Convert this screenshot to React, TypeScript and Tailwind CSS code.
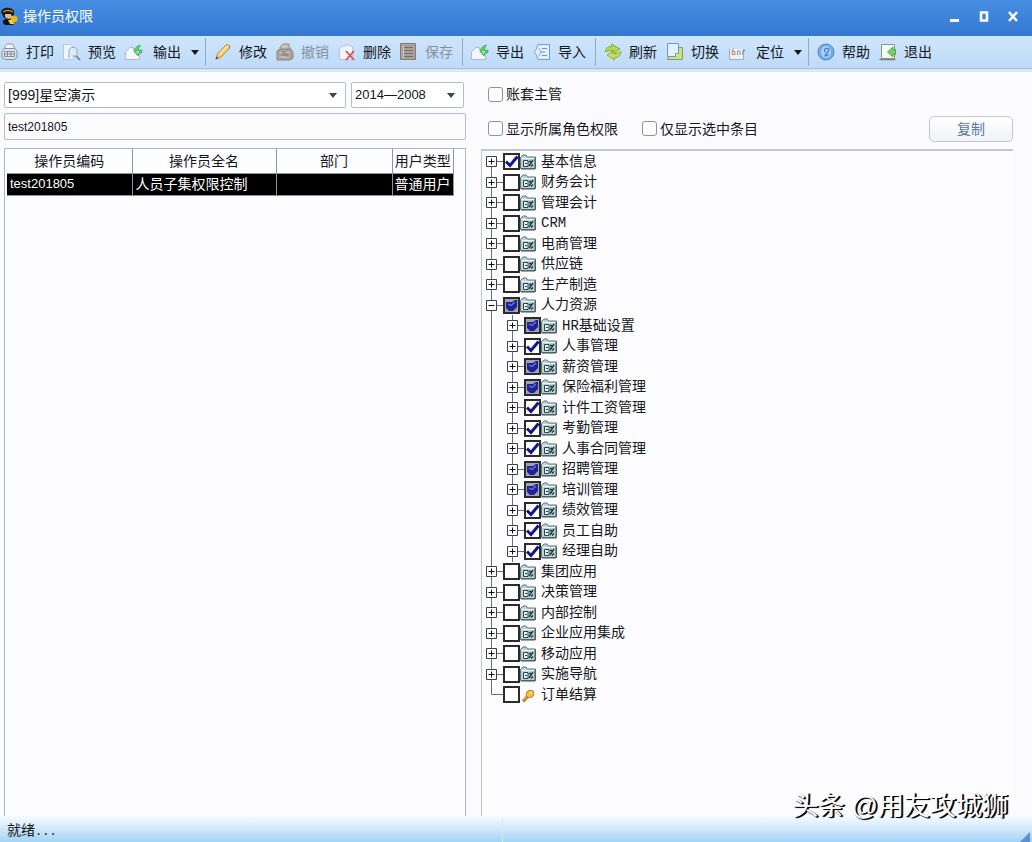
import { useState, type ReactNode } from "react"
import clsx from "clsx"

type CheckState = "off" | "on" | "mixed"

type TreeNode = {
  label: string
  state: CheckState
  open?: boolean
  leaf?: boolean
  children?: TreeNode[]
}

const TREE: TreeNode[] = [
  { label: "基本信息", state: "on" },
  { label: "财务会计", state: "off" },
  { label: "管理会计", state: "off" },
  { label: "CRM", state: "off" },
  { label: "电商管理", state: "off" },
  { label: "供应链", state: "off" },
  { label: "生产制造", state: "off" },
  {
    label: "人力资源",
    state: "mixed",
    open: true,
    children: [
      { label: "HR基础设置", state: "mixed" },
      { label: "人事管理", state: "on" },
      { label: "薪资管理", state: "mixed" },
      { label: "保险福利管理", state: "mixed" },
      { label: "计件工资管理", state: "on" },
      { label: "考勤管理", state: "on" },
      { label: "人事合同管理", state: "on" },
      { label: "招聘管理", state: "mixed" },
      { label: "培训管理", state: "mixed" },
      { label: "绩效管理", state: "on" },
      { label: "员工自助", state: "on" },
      { label: "经理自助", state: "on" },
    ],
  },
  { label: "集团应用", state: "off" },
  { label: "决策管理", state: "off" },
  { label: "内部控制", state: "off" },
  { label: "企业应用集成", state: "off" },
  { label: "移动应用", state: "off" },
  { label: "实施导航", state: "off" },
  { label: "订单结算", state: "off", leaf: true },
]

const Icon = ({ children }: { children: ReactNode }) => (
  <svg viewBox="0 0 18 18" className="size-[18px] shrink-0" fill="none" aria-hidden="true">
    {children}
  </svg>
)

const PrintIcon = () => (
  <Icon>
    <path d="M4 6V3l2-2h5l2 2v3" fill="#f4f7fa" stroke="#8b98a8" />
    <path d="M3 5.500h11l2 3v6l-3 2H4l-3-2v-6z" fill="#dde4ec" stroke="#8290a0" />
    <path d="M3.500 8.500h10v5h-10zM6.500 8.500v5M10 8.500v5M3.500 11h10" stroke="#7b8796" strokeWidth=".9" />
  </Icon>
)

const PreviewIcon = () => (
  <Icon>
    <path d="M.5 1.500h7l3 3v12H.5z" fill="#edf4fc" stroke="#b4c8e0" />
    <path d="M6 15V8c0-5 8-5 8 0v5H9.500" fill="#dcebfa" stroke="#93a9c4" />
    <path d="m13 13 4 4" stroke="#66788f" strokeWidth="1.600" />
  </Icon>
)

const ExportIcon = () => (
  <Icon>
    <path d="M.5 9 5 4.500h3l1 3h5.500v9H.5z" fill="#f2f7fc" stroke="#a5b9d2" />
    <path d="M15.500 2c-4 1-6 3.500-6.500 6.500l4 4.500 1-3h2.500L17 7l-3.500.500c0-2 .5-3.500 2-5.500z" fill="#5fd06a" stroke="#2ea24a" strokeWidth=".7" />
    <path d="M13.500 8.500 12 10" stroke="#e9fbe9" strokeWidth="1.500" />
  </Icon>
)

const EditIcon = () => (
  <Icon>
    <path d="M2 16 3.500 11 12.500 1.500 16 3 15 6 7 14z" fill="#f5c866" stroke="#b98a45" />
    <path d="M5 12 13.500 3" stroke="#fff0b8" strokeWidth="1.500" />
    <path d="m1.500 16.500 1-3 2 1.700z" fill="#5b4a36" />
  </Icon>
)

const UndoIcon = () => (
  <Icon>
    <path d="M4 8V4l3-3h6l1 6" fill="#c3bdb8" stroke="#958d88" />
    <path d="M1 8 4 6h11l2 4v5l-3 2H1z" fill="#aaa29d" stroke="#8b837e" />
    <path d="M6 3.500h5M4 9.500h9M3.500 14h9" stroke="#d9d4d0" />
    <path d="M6 9.500c4-1 6 1 5 4M6 12h4" stroke="#7d756f" />
  </Icon>
)

const DeleteIcon = () => (
  <Icon>
    <path d="M1.500 6 5 3h3V1.500l6.500 2v13h-13z" fill="#f0f5fb" stroke="#b8c6d9" />
    <path d="m8 8 8 9M16 8l-8 9" stroke="#dd4a51" strokeWidth="1.800" />
  </Icon>
)

const SaveIcon = () => (
  <Icon>
    <path d="M.5.5h15v16H.5z" fill="#a9a19c" stroke="#847c77" />
    <path d="M3.500 3v12" stroke="#cfc9c5" />
    <path d="M4 4.500h9M4 7.500h9M4 10.500h9M4 13.500h9" stroke="#746d69" />
  </Icon>
)

const ImportIcon = () => (
  <Icon>
    <path d="M5 1.500h11.500v15H5L3.500 12 1 9l2.500-3z" fill="#e2effc" stroke="#6f9fd2" />
    <path d="M9 5.500h5M7 9h5M9 12.500h5" stroke="#6f95c4" strokeWidth="1.200" />
    <path d="m6 5 2 4-2 4" stroke="#86b0de" />
  </Icon>
)

const RefreshIcon = () => (
  <Icon>
    <path d="M1.500 9c0-4 3-6 6-5.500V1L16 6l-6 4.500V8C7 7 4 7.500 1.500 9z" fill="#b3d84a" stroke="#6f9f2e" strokeWidth=".8" />
    <path d="M17 8.500c0 4-3 6.500-6.500 6V17L3 12l5.500-4v2.500c3 .5 6 0 8.500-2z" fill="#c6de4e" stroke="#7da535" strokeWidth=".8" />
  </Icon>
)

const SwitchIcon = () => (
  <Icon>
    <path d="M10.500 4.500h6v12h-15l1-3z" fill="#cfe27a" stroke="#7ba06a" />
    <path d="M1.500.5h11v9l-3 4h-8z" fill="#e2effc" stroke="#6c97cc" />
    <path d="M9.500 13.500v-3h3" fill="#fff" stroke="#6c97cc" />
  </Icon>
)

const LocateIcon = () => (
  <Icon>
    <path d="M1.500 6v10.500h14V6" fill="#eaf2fb" stroke="#9aaabd" />
    <path d="M5.500 5.500 4 9v2.500h3V8.500H4.500" stroke="#d2804c" />
    <path d="M9.500 12V8h2.500v4M14 11.500l2.500-5M14 8h3" stroke="#8b8f9c" />
  </Icon>
)

const HelpIcon = () => (
  <Icon>
    <circle cx="9" cy="9" r="8" fill="#74aeea" stroke="#4b86cc" />
    <ellipse cx="9" cy="9" rx="5" ry="6" fill="#a9d0f6" />
    <path d="M8 9c-2-4 4-5 4-2 0 2-4 3-4 6 2 0 3-1 3.500-2" stroke="#3c76bf" strokeWidth="1.200" />
  </Icon>
)

const ExitIcon = () => (
  <Icon>
    <path d="M2.500 1.500h13v14h-13z" fill="#f7faf4" stroke="#8d9690" />
    <path d="M.5 16.500h16" stroke="#77807a" strokeWidth="1.500" />
    <path d="m8.500 9 5.500-5v2.500h2.500v5H14V14z" fill="#76cf5e" stroke="#3e9b3a" strokeWidth=".8" />
  </Icon>
)

const AppIcon = () => (
  <Icon>
    <path d="M1 5c1-5 10-6 13-1v4l-2 3H4z" fill="#1a1714" />
    <path d="M5 7h6l1 3-3 2-4-2z" fill="#e8b98e" />
    <path d="M3 5c3-2 7-2 10 0" stroke="#c99a35" strokeWidth="1.200" />
    <path d="M3 16c-1-3 3-5 6-4l7-2 1 4-4 4H5z" fill="#16130f" />
    <circle cx="14" cy="12" r="3.500" fill="#e8b91e" />
    <path d="m8 13 2 4h5l-3-4z" fill="#f0cf3c" />
  </Icon>
)

const FolderIcon = () => (
  <svg viewBox="0 0 16 16" className="size-4 shrink-0" fill="none" aria-hidden="true">
    <path d="M.5 14.500v-11L3 1h3l1.500 2h8v11.500z" fill="#bcd3d6" stroke="#5d7779" />
    <path d="M1.500 4.500h13" stroke="#eef8f8" />
    <path d="M3.500 6.500H8v6H3.500zM5 9.500h2" fill="#e6f3f3" stroke="#2c4347" />
    <path d="M9 7.500h2M9 12l4-6M11 12.500l2-2" stroke="#1f3438" strokeWidth="1.400" />
    <path d="M15 4v11H1" stroke="#3e5558" />
  </svg>
)

const KeyIcon = () => (
  <svg viewBox="0 0 16 16" className="size-4 shrink-0" fill="none" aria-hidden="true">
    <path d="m8 9-5 5.500" stroke="#a8641a" strokeWidth="3" />
    <path d="m8 9-5 5" stroke="#efa63a" strokeWidth="1.500" />
    <ellipse cx="10" cy="7" rx="4" ry="3.500" transform="rotate(-40 10 7)" fill="#f8bd45" stroke="#bd7a22" />
    <circle cx="11" cy="6" r="1" fill="#fff0b8" />
  </svg>
)

const Caret = () => (
  <svg viewBox="0 0 8 5" className="h-[5px] w-2" aria-hidden="true">
    <path d="M0 0h8L4 5z" fill="currentColor" />
  </svg>
)

const Separator = () => <div className="mr-2 h-7 w-px shrink-0 bg-[#8fabcb]" />

const ToolButton = ({
  icon,
  label,
  disabled,
  menu,
}: {
  icon: ReactNode
  label: string
  disabled?: boolean
  menu?: boolean
}) => (
  <button
    type="button"
    disabled={disabled}
    className={clsx(
      "flex h-8 shrink-0 items-center whitespace-nowrap disabled:text-[#87919f]",
      menu ? "gap-[10px] pr-[6px]" : "gap-[7px] pr-[9px]"
    )}
  >
    {icon}
    {label}
    {menu && <Caret />}
  </button>
)

const Toolbar = () => (
  <div className="flex h-[33px] items-center border-b border-[#9cbfe2] bg-linear-to-b from-[#cfe5fc] to-[#bfdbf8] pl-px">
    <ToolButton icon={<PrintIcon />} label="打印" />
    <ToolButton icon={<PreviewIcon />} label="预览" />
    <ToolButton icon={<ExportIcon />} label="输出" menu />
    <Separator />
    <ToolButton icon={<EditIcon />} label="修改" />
    <ToolButton icon={<UndoIcon />} label="撤销" disabled />
    <ToolButton icon={<DeleteIcon />} label="删除" />
    <ToolButton icon={<SaveIcon />} label="保存" disabled />
    <Separator />
    <ToolButton icon={<ExportIcon />} label="导出" />
    <ToolButton icon={<ImportIcon />} label="导入" />
    <Separator />
    <ToolButton icon={<RefreshIcon />} label="刷新" />
    <ToolButton icon={<SwitchIcon />} label="切换" />
    <ToolButton icon={<LocateIcon />} label="定位" menu />
    <Separator />
    <ToolButton icon={<HelpIcon />} label="帮助" />
    <ToolButton icon={<ExitIcon />} label="退出" />
  </div>
)

const TitleBar = () => (
  <header className="flex h-9 items-center bg-linear-to-b from-[#478de2] to-[#3579d2] pr-[13px] pb-1 text-white">
    <AppIcon />
    <h1 className="ml-[5px] flex-1">操作员权限</h1>
    <div className="flex items-center gap-[17px]">
      <button type="button" aria-label="最小化">
        <svg viewBox="0 0 12 12" className="size-3" aria-hidden="true">
          <path d="M1 9h9v3H1z" fill="#fff" />
        </svg>
      </button>
      <button type="button" aria-label="最大化">
        <svg viewBox="0 0 12 12" className="size-3" fill="none" aria-hidden="true">
          <path d="M3 2.500h6v8H3z" stroke="#fff" strokeWidth="2.500" />
        </svg>
      </button>
      <button type="button" aria-label="关闭">
        <svg viewBox="0 0 12 12" className="size-3" fill="none" aria-hidden="true">
          <path d="m2 2 8 9M10 2l-8 9" stroke="#fff" strokeWidth="2.500" />
        </svg>
      </button>
    </div>
  </header>
)

const Picker = ({
  label,
  value,
  className,
}: {
  label: string
  value: string
  className?: string
}) => (
  <div className={clsx("grid items-center rounded-[2px] border border-[#b3bcc8] bg-white", className)}>
    <select
      aria-label={label}
      className="col-start-1 row-start-1 h-6 w-full appearance-none bg-transparent px-[3px] outline-none"
    >
      <option>{value}</option>
    </select>
    <span className="pointer-events-none col-start-1 row-start-1 mr-2 justify-self-end text-[#3c4450]">
      <Caret />
    </span>
  </div>
)

const OptionBox = ({ label }: { label: string }) => (
  <label className="flex items-center gap-[3px] whitespace-nowrap">
    <input
      type="checkbox"
      className="size-[15px] appearance-none rounded-[3px] border border-[#8f949c] bg-white checked:bg-[#3579d2]"
    />
    {label}
  </label>
)

const OperatorTable = () => (
  <table className="w-[447px] table-fixed border-collapse text-left">
    <colgroup>
      <col className="w-[125px]" />
      <col className="w-[144px]" />
      <col className="w-[116px]" />
      <col />
    </colgroup>
    <thead>
      <tr className="h-6">
        {["操作员编码", "操作员全名", "部门", "用户类型"].map((name) => (
          <th
            key={name}
            className="border-r border-b border-[#8b959c] p-0 text-center font-normal whitespace-nowrap"
          >
            {name}
          </th>
        ))}
      </tr>
    </thead>
    <tbody>
      <tr className="h-[22px] bg-black text-white">
        {["test201805", "人员子集权限控制", "", "普通用户"].map((value, i) => (
          <td
            key={i}
            className="border-r border-b border-[#8b959c] px-[3px] py-0 whitespace-nowrap first:text-[13px] last:px-0.5"
          >
            {value}
          </td>
        ))}
      </tr>
    </tbody>
  </table>
)

const Expander = ({ node, first }: { node: TreeNode; first: boolean }) => (
  <svg
    viewBox="0 0 21 21"
    className="h-[21px] w-[21px] shrink-0"
    fill="none"
    stroke="#6a6f77"
    aria-hidden="true"
  >
    {!first && <path d="M9.500 0v10.500" />}
    {!node.leaf && <path d="M9.500 10.500V21" />}
    <path d="M9.500 10.500H21" />
    {!node.leaf && (
      <>
        <path d="M4.500 5.500h10v10h-10z" fill="#fff" stroke="#3c4046" />
        <path d="M6.500 10.500h6" stroke="#111" />
        {!node.open && <path d="M9.500 7.500v6" stroke="#111" />}
      </>
    )}
  </svg>
)

const TreeRow = ({
  node,
  level,
  first = false,
}: {
  node: TreeNode
  level: 1 | 2
  first?: boolean
}) => {
  const [state, setState] = useState<CheckState>(node.state)

  return (
    <li role="treeitem" aria-level={level} className="flex h-5 items-center odd:h-[21px]">
      {level === 2 && <span className="mr-[11px] ml-[9px] h-full w-px shrink-0 bg-[#6a6f77]" />}
      <Expander node={node} first={first} />
      <label className="flex items-center whitespace-nowrap">
        <span className="grid">
          <input
            type="checkbox"
            checked={state !== "off"}
            onChange={() => setState(state === "off" ? "on" : "off")}
            className={clsx(
              "col-start-1 row-start-1 size-[17px] appearance-none border-2 border-[#2b2b2b]",
              state === "mixed" ? "bg-[#a5a3ad]" : "bg-white"
            )}
          />
          {state !== "off" && (
            <svg
              viewBox="0 0 17 17"
              className="pointer-events-none col-start-1 row-start-1 size-[17px]"
              fill="none"
              aria-hidden="true"
            >
              {state === "mixed" ? (
                <>
                  <path d="M3 5h6l3-2h2v7l-4 4H6l-3-3z" fill="#1e229a" />
                  <path d="m5 7 3 1.500L12 5" stroke="#6f7bd8" strokeWidth="1.200" />
                </>
              ) : (
                <path d="m3 8.500 4 4 7.500-9" stroke="#14148c" strokeWidth="3" />
              )}
            </svg>
          )}
        </span>
        {node.leaf ? <KeyIcon /> : <FolderIcon />}
        <span className="ml-[5px]">{node.label}</span>
      </label>
    </li>
  )
}

const PermissionTree = () => (
  <ul
    role="tree"
    aria-label="权限"
    className="font-['Liberation_Mono','Noto_Sans_CJK_SC',monospace]"
  >
    {TREE.flatMap((node, i) => [
      <TreeRow key={node.label} node={node} level={1} first={i === 0} />,
      ...(node.children ?? []).map((child) => (
        <TreeRow key={child.label} node={child} level={2} />
      )),
    ])}
  </ul>
)

export default function App() {
  return (
    <div className="relative flex min-h-screen flex-col overflow-hidden bg-[#fbfbfe] font-['Liberation_Sans','Noto_Sans_CJK_SC',sans-serif] text-sm/5 text-[#15171b]">
      <TitleBar />
      <Toolbar />
      <div className="h-[3px] bg-[#dbe7f4]" />

      <main className="grid flex-1 grid-cols-[462fr_532fr] gap-x-[15px] pt-[10px] pr-[19px] pl-1">
        <section className="flex flex-col">
          <div className="flex gap-[5px] pr-0.5">
            <Picker label="账套" value="[999]星空演示" className="flex-1" />
            <Picker label="年度" value="2014—2008" className="w-[113px] text-[13px]" />
          </div>
          <input
            aria-label="操作员"
            defaultValue="test201805"
            className="mt-[5px] h-[27px] w-full rounded-[2px] border border-[#b3bcc8] bg-transparent px-[3px] text-xs outline-none"
          />
          <div className="mt-2 flex-1 border border-b-0 border-[#a9b8c4] bg-[#fdfdff] pl-0.5">
            <OperatorTable />
          </div>
        </section>

        <section className="flex flex-col">
          <div className="flex h-6 items-center pl-[7px]">
            <OptionBox label="账套主管" />
          </div>
          <div className="mt-[9px] flex h-[27px] items-center pl-[7px]">
            <OptionBox label="显示所属角色权限" />
            <div className="ml-6 flex-1">
              <OptionBox label="仅显示选中条目" />
            </div>
            <button
              type="button"
              className="h-[26px] w-[84px] rounded-[5px] border border-[#c3c7d0] bg-linear-to-b from-white to-[#f1f2f7] text-[#5878a4]"
            >
              复制
            </button>
          </div>
          <div className="mt-[7px] flex-1 border-t-2 border-l border-[#c0c5ce] bg-[#fdfdff]">
            <PermissionTree />
          </div>
        </section>
      </main>

      <footer className="flex h-[26px] items-center bg-linear-to-b from-[#f8fbff] to-[#a3d3f4] pt-0.5 pl-[7px]">
        <span className="w-[495px]">
          就绪<span className="font-['Liberation_Mono',monospace] text-xs">...</span>
        </span>
        <span className="h-full w-px bg-[#d5eafa]" />
        <svg viewBox="0 0 10 10" className="mr-0.5 ml-auto size-[10px] self-end" aria-hidden="true">
          <path d="M10 0v10H0z" fill="#5a8fd0" />
        </svg>
      </footer>

      <p className="pointer-events-none absolute right-6 bottom-[18px] text-[26px]/9 text-white [text-shadow:1px_1px_1px_#000,2px_1px_0_#111]">
        头条 @用友攻城狮
      </p>
    </div>
  )
}
